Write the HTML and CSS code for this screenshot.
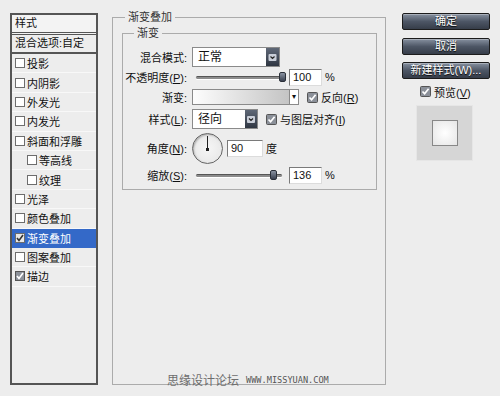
FILE: index.html
```html
<!DOCTYPE html>
<html lang="zh-CN">
<head>
    <meta charset="UTF-8" />
    <title>图层样式 - 渐变叠加</title>
    <link rel="stylesheet" href="styles.css">
</head>
<body>
    <div id="dialog">
        <div id="styles-list">
            <div class="list-head">样式</div>
            <div class="list-blend">混合选项:自定</div>
            <ul class="effects">
                <li><span class="cb"></span>投影</li>
                <li><span class="cb"></span>内阴影</li>
                <li><span class="cb"></span>外发光</li>
                <li><span class="cb"></span>内发光</li>
                <li><span class="cb"></span>斜面和浮雕</li>
                <li class="sub"><span class="cb"></span>等高线</li>
                <li class="sub"><span class="cb"></span>纹理</li>
                <li><span class="cb"></span>光泽</li>
                <li><span class="cb"></span>颜色叠加</li>
                <li class="active"><span class="cb on"><svg width="8" height="8" viewBox="0 0 8 8"><path d="M1 4 L3 6.5 L7 1" fill="none" stroke="#333" stroke-width="1.6"/></svg></span>渐变叠加</li>
                <li><span class="cb"></span>图案叠加</li>
                <li><span class="cb checked"><svg width="8" height="8" viewBox="0 0 8 8"><path d="M1 4 L3 6.5 L7 1" fill="none" stroke="#fff" stroke-width="1.6"/></svg></span>描边</li>
            </ul>
        </div>

        <fieldset class="group outer">
            <legend>渐变叠加</legend>
            <fieldset class="group inner">
                <legend>渐变</legend>

                <div class="row r1">
                    <label>混合模式:</label>
                    <div class="select wide">
                        <span class="val">正常</span>
                        <span class="drop"><svg width="13" height="18" viewBox="0 0 13 18"><rect x="2.5" y="6" width="8" height="7" rx="1" fill="#c9ced8"/><path d="M4.5 8.5 L6.5 10.5 L8.5 8.5" fill="none" stroke="#222" stroke-width="1.2"/></svg></span>
                    </div>
                </div>

                <div class="row r2">
                    <label>不透明度(<u>P</u>):</label>
                    <div class="ctrl">
                        <div class="slider opacity"><span class="thumb"></span></div>
                        <span class="num">100</span>
                        <span class="unit">%</span>
                    </div>
                </div>

                <div class="row r3">
                    <label>渐变:</label>
                    <div class="ctrl">
                        <div class="grad">
                            <span class="grad-fill"></span>
                            <span class="grad-arrow">▾</span>
                        </div>
                        <span class="check"><svg width="11" height="11" viewBox="0 0 11 11"><rect x="0.5" y="0.5" width="10" height="10" rx="1" fill="#8b9099" stroke="#555"/><path d="M2.5 5.5 L4.6 7.8 L8.6 2.8" fill="none" stroke="#fff" stroke-width="1.7"/></svg><span>反向(<u>R</u>)</span></span>
                    </div>
                </div>

                <div class="row r4">
                    <label>样式(<u>L</u>):</label>
                    <div class="ctrl">
                        <div class="select narrow">
                            <span class="val">径向</span>
                            <span class="drop"><svg width="12" height="18" viewBox="0 0 12 18"><rect x="2" y="6" width="8" height="7" rx="1" fill="#c9ced8"/><path d="M4 8.5 L6 10.5 L8 8.5" fill="none" stroke="#222" stroke-width="1.2"/></svg></span>
                        </div>
                        <span class="check"><svg width="11" height="11" viewBox="0 0 11 11"><rect x="0.5" y="0.5" width="10" height="10" rx="1" fill="#8b9099" stroke="#555"/><path d="M2.5 5.5 L4.6 7.8 L8.6 2.8" fill="none" stroke="#fff" stroke-width="1.7"/></svg><span>与图层对齐(<u>I</u>)</span></span>
                    </div>
                </div>

                <div class="row r5">
                    <label>角度(<u>N</u>):</label>
                    <div class="ctrl">
                        <div class="dial"><span class="needle"></span><span class="hub"></span></div>
                        <span class="num angle">90</span>
                        <span class="unit">度</span>
                    </div>
                </div>

                <div class="row r6">
                    <label>缩放(<u>S</u>):</label>
                    <div class="ctrl">
                        <div class="slider scale"><span class="thumb"></span></div>
                        <span class="num">136</span>
                        <span class="unit">%</span>
                    </div>
                </div>
            </fieldset>
        </fieldset>

        <div id="actions">
            <button>确定</button>
            <button>取消</button>
            <button>新建样式(W)...</button>
            <div class="preview-check"><svg width="11" height="11" viewBox="0 0 11 11"><rect x="0.5" y="0.5" width="10" height="10" rx="1" fill="#8b9099" stroke="#555"/><path d="M2.5 5.5 L4.6 7.8 L8.6 2.8" fill="none" stroke="#fff" stroke-width="1.7"/></svg><span>预览(<u>V</u>)</span></div>
            <div class="swatch"><span class="swatch-inner"></span></div>
        </div>
    </div>

    <div class="watermark">思缘设计论坛<span>WWW.MISSYUAN.COM</span></div>
</body>
</html>
```

FILE: styles.css
```css
body{
    margin: 0;
    background: #ededed;
    font-family: "Liberation Sans", "Noto Sans CJK SC", sans-serif;
    font-size: 11px;
    color: #111;
}
#dialog{
    display: flex;
    align-items: flex-start;
    padding: 10px 0 0 10px;
    height: 386px;
    box-sizing: border-box;
}

/* left list of effects */
#styles-list{
    margin-top: 3px;
    width: 88px;
    height: 372px;
    box-sizing: border-box;
    border: 2px solid #555;
    background: #ededed;
}
.list-head{
    height: 17px;
    line-height: 17px;
    padding-left: 3px;
    background: #f3f3f3;
    border-bottom: 3px double #555;
}
.list-blend{
    height: 17px;
    line-height: 17px;
    padding-left: 3px;
    border-bottom: 2px solid #555;
}
.effects{
    list-style: none;
    margin: 0;
    padding: 0;
}
.effects li{
    height: 19.4px;
    box-sizing: border-box;
    display: flex;
    align-items: center;
    padding-left: 3px;
    border-bottom: 1px solid #f8f8f8;
}
.effects li.sub{
    padding-left: 15px;
}
.effects li.active{
    background: #3469c8;
    color: white;
    border-bottom-color: #3469c8;
}
.cb{
    width: 10px;
    height: 10px;
    box-sizing: border-box;
    border: 1px solid #6d6d6d;
    background: #fff;
    margin-right: 2px;
    display: flex;
    align-items: center;
    justify-content: center;
}
.cb.on{
    background: #e8e8e8;
}
.cb.checked{
    background: #8b9099;
    border-color: #555;
}

/* middle group boxes */
.group{
    margin: 0;
    min-width: 0;
    border: 1px solid #ababab;
    box-sizing: border-box;
}
.group legend{
    padding: 0 3px;
    line-height: 14px;
    color: #333;
}
.outer{
    margin-left: 14px;
    width: 274px;
    height: 375px;
    padding: 2px 8px 0 9px;
}
.outer > legend{
    margin-left: 3px;
}
.inner{
    width: 255px;
    padding: 6px 0 4px 0;
}
.inner > legend{
    margin-left: 11px;
}
.row{
    display: grid;
    grid-template-columns: 64px auto;
    column-gap: 5px;
    align-items: center;
}
.row label{
    text-align: right;
    white-space: nowrap;
}
.r1{ height: 21px; }
.r2{ height: 20px; }
.r3{ height: 20px; }
.r4{ height: 24px; }
.r5{ height: 34px; }
.r6{ height: 20px; }
.ctrl{
    display: flex;
    align-items: center;
}

.select{
    display: flex;
    height: 20px;
    box-sizing: border-box;
    border: 1px solid #8a8a8a;
    background: #fff;
}
.select.wide{ width: 88px; }
.select.narrow{ width: 66px; }
.select .val{
    flex: 1;
    padding-left: 5px;
    line-height: 18px;
    font-size: 12px;
}
.select .drop{
    display: flex;
    background: linear-gradient(#5f6877, #2f3642);
}

.slider{
    position: relative;
    height: 2px;
    margin-left: 4px;
    background: #8c8c8c;
    border-top: 1px solid #555;
    border-radius: 2px;
    box-shadow: 0 1px 0 #fff;
}
.slider.opacity{ width: 90px; }
.slider.scale{ width: 86px; margin-right: 4px; }
.thumb{
    position: absolute;
    top: -5px;
    width: 7px;
    height: 10px;
    border-radius: 2px;
    background: linear-gradient(#8a93a2, #3a4150);
    border: 1px solid #2a2f38;
    box-sizing: border-box;
}
.opacity .thumb{ right: 0; }
.scale .thumb{ left: 74px; }

.num{
    width: 33px;
    height: 17px;
    box-sizing: border-box;
    margin-left: 3px;
    padding-left: 3px;
    background: #fff;
    border: 1px solid;
    border-color: #7a7a7a #dcdcdc #dcdcdc #7a7a7a;
    line-height: 15px;
    font-size: 11px;
}
.num.angle{
    width: 36px;
    margin-left: 4px;
}
.unit{
    margin-left: 3px;
}

.grad{
    display: flex;
    width: 107px;
    height: 16px;
    box-sizing: border-box;
    border: 1px solid #8a8a8a;
}
.grad-fill{
    flex: 1;
    background: linear-gradient(to right, #fdfdfd, #c4c4c4);
}
.grad-arrow{
    width: 8px;
    background: #fff;
    border-left: 1px solid #8a8a8a;
    font-size: 8px;
    line-height: 14px;
    text-align: center;
}
.check{
    display: flex;
    align-items: center;
    gap: 3px;
    margin-left: 8px;
    white-space: nowrap;
}

.dial{
    position: relative;
    width: 31px;
    height: 31px;
    box-sizing: border-box;
    border-radius: 50%;
    border: 1px solid #666;
    background: radial-gradient(#f6f6f6, #e4e4e4);
    box-shadow: inset 1px 1px 2px #aaa;
}
.needle{
    position: absolute;
    left: 14px;
    top: 2px;
    width: 1px;
    height: 13px;
    background: #222;
}
.hub{
    position: absolute;
    left: 13px;
    top: 14px;
    width: 3px;
    height: 3px;
    background: #222;
}

/* right buttons */
#actions{
    margin: 3px 0 0 16px;
    width: 88px;
    display: flex;
    flex-direction: column;
}
button{
    height: 17px;
    margin-bottom: 7.5px;
    padding: 0;
    border: 1px solid #1c1c1c;
    border-radius: 2px;
    background: linear-gradient(#8791a0, #4d5665 50%, #363d49);
    box-shadow: inset 0 1px 0 rgba(255,255,255,0.3);
    color: white;
    font-family: inherit;
    font-size: 11px;
    line-height: 15px;
    text-shadow: 0 1px 1px #000;
}
.preview-check{
    display: flex;
    align-items: center;
    gap: 3px;
    padding-left: 18px;
    margin-top: -1px;
    height: 12px;
}
.swatch{
    margin: 7px 0 0 14px;
    width: 57px;
    height: 56px;
    box-sizing: border-box;
    border: 1px solid #e6e6e6;
    background: #d6d6d6;
    display: flex;
    align-items: center;
    justify-content: center;
}
.swatch-inner{
    width: 26px;
    height: 26px;
    box-sizing: border-box;
    border: 1px solid #888;
    background: radial-gradient(#ffffff, #e6e6e6);
}

.watermark{
    position: absolute;
    left: 167px;
    top: 371px;
    font-size: 12px;
    color: #6e6e6e;
    display: flex;
    align-items: center;
}
.watermark span{
    margin-left: 7px;
    font-family: "DejaVu Sans Mono", monospace;
    font-size: 8.6px;
    color: #555;
}
```
